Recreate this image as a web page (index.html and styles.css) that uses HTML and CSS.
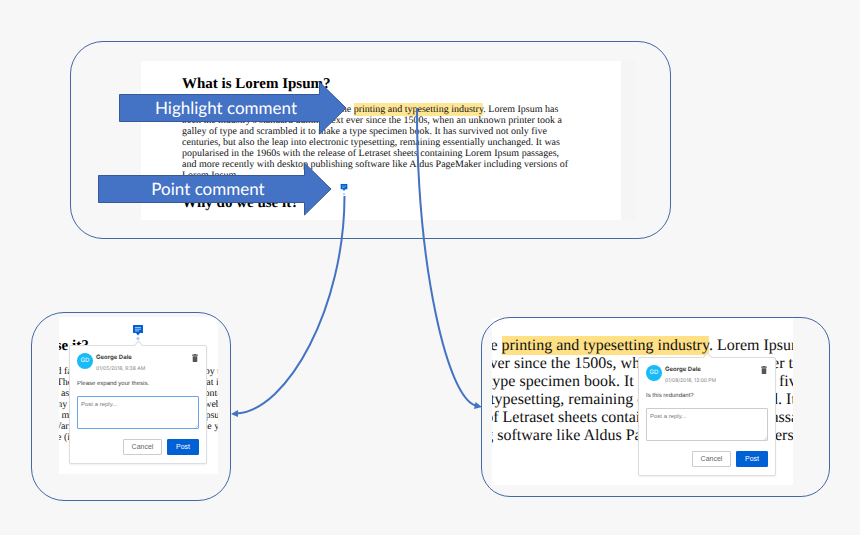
FILE: index.html
```html
<!DOCTYPE html>
<html lang="en">
<head>
<meta charset="utf-8">
<title>Comment types</title>
<link rel="stylesheet" href="styles.css">
</head>
<body>
<main class="canvas">
  <section class="panel panel-overview">
    <article class="doc">
      <h2>What is Lorem Ipsum?</h2>
      <p>Lorem Ipsum is simply dummy text of the <mark>printing and typesetting industry</mark>. Lorem Ipsum has<br>
      been the industry's standard dummy text ever since the 1500s, when an unknown printer took a<br>
      galley of type and scrambled it to make a type specimen book. It has survived not only five<br>
      centuries, but also the leap into electronic typesetting, remaining essentially unchanged. It was<br>
      popularised in the 1960s with the release of Letraset sheets containing Lorem Ipsum passages,<br>
      and more recently with desktop publishing software like Aldus PageMaker including versions of<br>
      Lorem Ipsum.</p>
      <h2>Why do we use it?</h2>
    </article>
  </section>

  <section class="panel panel-point">
    <article class="doc">
      <h2>Why do we use it?</h2>
      <p>It is a long established fact that a reader will be distracted by the readable content of a page when<br>
      looking at its layout. The point of using Lorem Ipsum is that it has a more-or-less normal<br>
      distribution of letters, as opposed to using 'Content here, content here', making it look like<br>
      readable English. Many desktop publishing packages and web page editors now use Lorem<br>
      Ipsum as their default model text, and a search for 'lorem ipsum' will uncover many web sites<br>
      still in their infancy. Various versions have evolved over the years, sometimes by accident,<br>
      sometimes on purpose (injected humour and the like).</p>
    </article>
  </section>

  <section class="panel panel-highlight">
    <article class="doc">
      <p><strong>Lorem Ipsum</strong> is simply dummy text of the <mark>printing and typesetting industry</mark>. Lorem Ipsum has<br>
      been the industry's standard dummy text ever since the 1500s, when an unknown printer took a<br>
      galley of type and scrambled it to make a type specimen book. It has survived not only five<br>
      centuries, but also the leap into electronic typesetting, remaining essentially unchanged. It was<br>
      popularised in the 1960s with the release of Letraset sheets containing Lorem Ipsum passages,<br>
      and more recently with desktop publishing software like Aldus PageMaker including versions of</p>
    </article>
  </section>

  <svg class="marker marker-small" viewBox="0 0 12 18" aria-hidden="true">
    <path class="blue" d="M1 0h10v8H8L6 10.500 4 8H1z"/><path class="lines" d="M3 3h6M3 5.500h4"/><circle class="dot" cx="6" cy="15" r="1.500"/>
  </svg>
  <svg class="marker marker-large" viewBox="0 0 12 18" aria-hidden="true">
    <path class="blue" d="M1.500 0h9q.5 0 .5.500v7q0 .5-.5.500H8L6 10.500 4 8H1.500Q1 8 1 7.500v-7Q1 0 1.500 0z"/><path class="lines" d="M3 2.500h6M3 4.200h6M3 5.900h4"/><circle class="dot" cx="6" cy="13.500" r="1.500"/>
  </svg>

  <form class="popover popover-point">
    <header>
      <span class="avatar">GD</span>
      <div class="who"><strong>George Dale</strong><time>01/05/2018, 9:38 AM</time></div>
      <button type="button" class="trash" aria-label="Delete"><svg viewBox="0 0 10 14"><path d="M0 1h3V0h4v1h3v2H0zM1 4h8v8.500q0 1.500-1.500 1.500h-5Q1 14 1 12.500z"/></svg></button>
    </header>
    <p>Please expand your thesis.</p>
    <textarea class="active" aria-label="Reply" placeholder="Post a reply..."></textarea>
    <footer><button type="button">Cancel</button><button type="button" class="primary">Post</button></footer>
  </form>

  <form class="popover popover-highlight">
    <header>
      <span class="avatar">GD</span>
      <div class="who"><strong>George Dale</strong><time>01/08/2018, 12:00 PM</time></div>
      <button type="button" class="trash" aria-label="Delete"><svg viewBox="0 0 10 14"><path d="M0 1h3V0h4v1h3v2H0zM1 4h8v8.500q0 1.500-1.500 1.500h-5Q1 14 1 12.500z"/></svg></button>
    </header>
    <p>Is this redundant?</p>
    <textarea aria-label="Reply" placeholder="Post a reply..."></textarea>
    <footer><button type="button">Cancel</button><button type="button" class="primary">Post</button></footer>
  </form>

  <div class="callout callout-highlight">
    <svg viewBox="0 0 228 54" aria-hidden="true"><path d="M.5 13.500h200V1L227 27 200.500 53V40.500H.5z"/></svg>
    <span>Highlight comment</span>
  </div>
  <div class="callout callout-point">
    <svg viewBox="0 0 234 54" aria-hidden="true"><path d="M.5 13.500h206V1L233 27 206.500 53V40.500H.5z"/></svg>
    <span>Point comment</span>
  </div>

  <svg class="connectors" width="860" height="535" aria-hidden="true">
    <path class="wire" d="M344.500 196C344.500 306 288 411 236 413.500"/>
    <path class="head" d="M231 414l7-4v7z"/>
    <path class="wire" d="M417 108C417 270 448 399 476 405.500"/>
    <path class="head" d="M482 407l-8 2 1.500-7z"/>
  </svg>
</main>
</body>
</html>
```
FILE: styles.css
```css
* { box-sizing: border-box; }
body { margin: 0; background: #f7f7f7; text-rendering: geometricPrecision; }
.canvas {
  position: relative;
  min-height: 100vh;
  overflow: hidden;
  font-family: Inter, "Liberation Sans", sans-serif;
}

.panel { position: absolute; isolation: isolate; }
.panel::after {
  content: "";
  position: absolute;
  inset: 0;
  border: 1px solid #4467a5;
  border-radius: 33px;
}
.panel-overview { left: 70px; top: 41px; width: 601px; padding: 20px 50px 19px 71px; }
.panel-point { left: 31px; top: 312px; width: 200px; padding: 5px 13px 27px 28px; }
.panel-highlight { left: 481px; top: 317px; width: 349px; padding: 1px 37px 12px 11px; }
.panel-highlight::after { border-radius: 29px; }

.doc {
  background: #fff;
  color: #111;
  overflow: hidden;
  white-space: nowrap;
  font-family: "Liberation Serif", serif;
  font-size: 10px;
  line-height: 11px;
}
.doc h2 { margin: 0; font-size: 15px; line-height: 18px; color: #000; }
.doc p { margin: 0; }
.doc mark { background: #ffe695; color: inherit; padding: 1px 0; }
.panel-overview .doc { height: 159px; padding: 14px 0 0 41px; box-shadow: 15px 0 #f5f5f5; }
.panel-overview p { margin: 11px 0 13px; }
.panel-point .doc { height: 157px; padding-top: 20px; }
.panel-point h2, .panel-point p { margin-left: -87px; }
.panel-point p { margin-top: 11px; }
.panel-highlight .doc { height: 167px; padding-top: 19px; font-size: 16px; line-height: 18px; }
.panel-highlight p { margin-left: -272px; }
.panel-highlight mark { background: #ffe085; }

.marker { position: absolute; }
.marker-small { left: 340px; top: 184px; width: 8px; height: 12px; }
.marker-large { left: 132px; top: 325px; width: 12px; height: 18px; }
.marker .blue { fill: #0061d5; }
.marker .lines { fill: none; stroke: #9cc2f2; stroke-width: 1; }
.marker .dot { fill: #a5caf6; }

.popover {
  position: absolute;
  width: 138px;
  padding: 7px 7px 8px;
  background: #fff;
  border: 1px solid #ddd;
  border-radius: 2px;
  box-shadow: 0 1px 2px #0001;
  color: #444;
  font-size: 6px;
  line-height: 8px;
}
.popover::before {
  content: "";
  position: absolute;
  left: 65px;
  top: -4px;
  width: 6px;
  height: 6px;
  background: #fff;
  border: 1px solid #ddd;
  border-width: 1px 0 0 1px;
  transform: rotate(45deg);
}
.popover-point { left: 69px; top: 345px; }
.popover-highlight { left: 638px; top: 357px; }
.popover header { display: flex; gap: 3px; }
.avatar {
  width: 16px;
  height: 16px;
  border-radius: 50%;
  background: #18bbf7;
  color: #fff;
  line-height: 16px;
  text-align: center;
}
.who { flex: 1; display: flex; flex-direction: column; gap: 3px; padding-top: 1px; }
.who time { font-size: 5px; color: #888; }
.popover .trash { width: 6px; height: 8px; margin: 1px 1px 0 0; padding: 0; border: 0; background: none; }
.trash svg { display: block; width: 6px; height: 8px; fill: #555; }
.popover p { margin: 7px 0 8px; font-family: "Liberation Sans", sans-serif; }
.popover textarea {
  display: block;
  width: 100%;
  height: 33px;
  padding: 3px;
  border: 1px solid #ccc;
  border-radius: 1px;
  outline: 0;
  font: 6px/8px "Liberation Sans", sans-serif;
  background: linear-gradient(135deg, #fff0 50%, #aaa 51%, #fff0 62%, #fff0 72%, #aaa 75%, #fff0 88%) right bottom / 5px 5px no-repeat #fff;
  resize: none;
}
.popover textarea::placeholder { color: #777; }
.popover textarea.active { border-color: #6aa3ea; }
.popover footer { display: flex; justify-content: flex-end; gap: 5px; margin-top: 10px; }
.popover footer button {
  height: 16px;
  width: 39px;
  padding: 0;
  border: 1px solid #ccc;
  border-radius: 1px;
  background: #fff;
  color: #666;
  font: 7px/14px "Liberation Sans", sans-serif;
}
.popover footer .primary { width: 32px; border-color: #0061d5; background: #0061d5; color: #fff; }

.callout { position: absolute; display: grid; height: 54px; }
.callout > * { grid-area: 1 / 1; }
.callout svg { width: 100%; height: 54px; fill: #4472c4; stroke: #36599b; }
.callout span {
  padding-right: 14px;
  text-align: center;
  color: #fff;
  font: 17px/54px Lato, sans-serif;
}
.callout-highlight { left: 119px; top: 81px; width: 228px; }
.callout-point { left: 98px; top: 162px; width: 234px; }

.connectors { position: absolute; left: 0; top: 0; pointer-events: none; }
.wire { fill: none; stroke: #4472c4; stroke-width: 2; }
.head { fill: #4472c4; }
```
